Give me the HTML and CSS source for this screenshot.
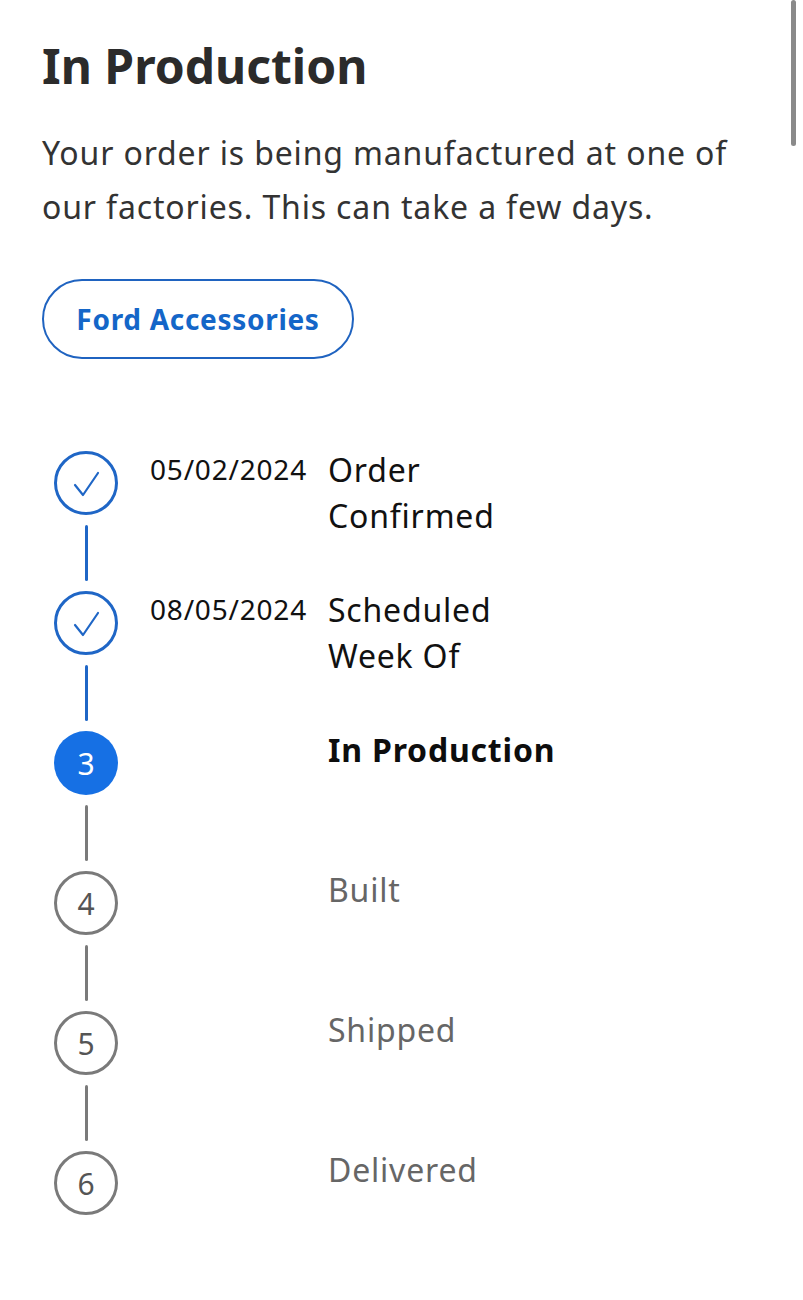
FILE: index.html
```html
<!DOCTYPE html>
<html lang="en">
<head>
    <meta charset="UTF-8">
    <meta name="viewport" content="width=device-width, initial-scale=1.0">
    <title>Order Status</title>
    <link rel="stylesheet" href="styles.css">
</head>
<body>

    <div class="scroll-thumb"></div>

    <main class="page">
        <h1 class="title">In Production</h1>
        <p class="intro">Your order is being manufactured at one of our factories. This can take a few days.</p>

        <a class="outline-btn" href="#">Ford Accessories</a>

        <!-- Order tracker -->
        <ol class="tracker">
            <li class="step done">
                <div class="marker">
                    <span class="dot">
                        <svg viewBox="0 0 64 64" width="64" height="64"><path d="M21 34 L29 44 L44 22" fill="none" stroke="currentColor" stroke-width="2.2" stroke-linecap="round" stroke-linejoin="round"/></svg>
                    </span>
                    <span class="line"></span>
                </div>
                <div class="date">05/02/2024</div>
                <div class="label">Order<br>Confirmed</div>
            </li>
            <li class="step done">
                <div class="marker">
                    <span class="dot">
                        <svg viewBox="0 0 64 64" width="64" height="64"><path d="M21 34 L29 44 L44 22" fill="none" stroke="currentColor" stroke-width="2.2" stroke-linecap="round" stroke-linejoin="round"/></svg>
                    </span>
                    <span class="line"></span>
                </div>
                <div class="date">08/05/2024</div>
                <div class="label">Scheduled<br>Week Of</div>
            </li>
            <li class="step current">
                <div class="marker">
                    <span class="dot">3</span>
                    <span class="line"></span>
                </div>
                <div class="date"></div>
                <div class="label">In Production</div>
            </li>
            <li class="step">
                <div class="marker">
                    <span class="dot">4</span>
                    <span class="line"></span>
                </div>
                <div class="date"></div>
                <div class="label">Built</div>
            </li>
            <li class="step">
                <div class="marker">
                    <span class="dot">5</span>
                    <span class="line"></span>
                </div>
                <div class="date"></div>
                <div class="label">Shipped</div>
            </li>
            <li class="step">
                <div class="marker">
                    <span class="dot">6</span>
                </div>
                <div class="date"></div>
                <div class="label">Delivered</div>
            </li>
        </ol>
    </main>

</body>
</html>
```

FILE: styles.css
```css
/* General */
body {
    margin: 0;
    background: #ffffff;
    font-family: "Noto Sans", "DejaVu Sans", sans-serif;
    color: #2e2e2e;
}

.page {
    padding: 18px 40px 40px 42px;
}

.scroll-thumb {
    position: absolute;
    top: 0;
    right: 7px;
    width: 5px;
    height: 146px;
    border-radius: 3px;
    background: #8a8a8a;
}

.title {
    margin: 0;
    font-size: 48px;
    font-weight: 700;
    line-height: 96px;
    color: #2b2b2b;
}

.intro {
    max-width: 700px;
    margin: 12px 0 0;
    font-size: 32px;
    letter-spacing: 0.85px;
    line-height: 54px;
    color: #333;
}

/* Button */
.outline-btn {
    display: inline-flex;
    align-items: center;
    justify-content: center;
    margin-top: 45px;
    width: 308px;
    height: 76px;
    border: 2px solid #1f63c0;
    border-radius: 40px;
    color: #1466c8;
    font-size: 28px;
    letter-spacing: 0.7px;
    font-weight: 700;
    text-decoration: none;
}

/* Tracker */
.tracker {
    list-style: none;
    margin: 92px 0 0;
    padding: 0;
}

.step {
    display: grid;
    grid-template-columns: 88px 198px 1fr;
    height: 140px;
}

.marker {
    display: flex;
    flex-direction: column;
    align-items: center;
}

.dot {
    box-sizing: border-box;
    width: 64px;
    height: 64px;
    border-radius: 50%;
    border: 3px solid #7a7a7a;
    display: flex;
    align-items: center;
    justify-content: center;
    font-size: 30px;
    color: #555;
    flex-shrink: 0;
}

.dot svg {
    margin: -3px;
    flex-shrink: 0;
}

.line {
    width: 3px;
    height: 56px;
    margin-top: 10px;
    border-radius: 2px;
    background: #7a7a7a;
}

.date {
    padding-left: 20px;
    font-size: 28px;
    letter-spacing: 0.8px;
    line-height: 36px;
    color: #111;
}

.label {
    font-size: 32px;
    letter-spacing: 0.8px;
    line-height: 46px;
    margin-top: -4px;
    color: #666;
}

.done .dot {
    border-color: #1f66c6;
    color: #1f66c6;
}

.done .line {
    background: #1f66c6;
}

.done .label {
    color: #111;
}

.current .dot {
    border: none;
    background: #1670e4;
    color: #fff;
}

.current .label {
    color: #0d0d0d;
    font-weight: 700;
}
```
